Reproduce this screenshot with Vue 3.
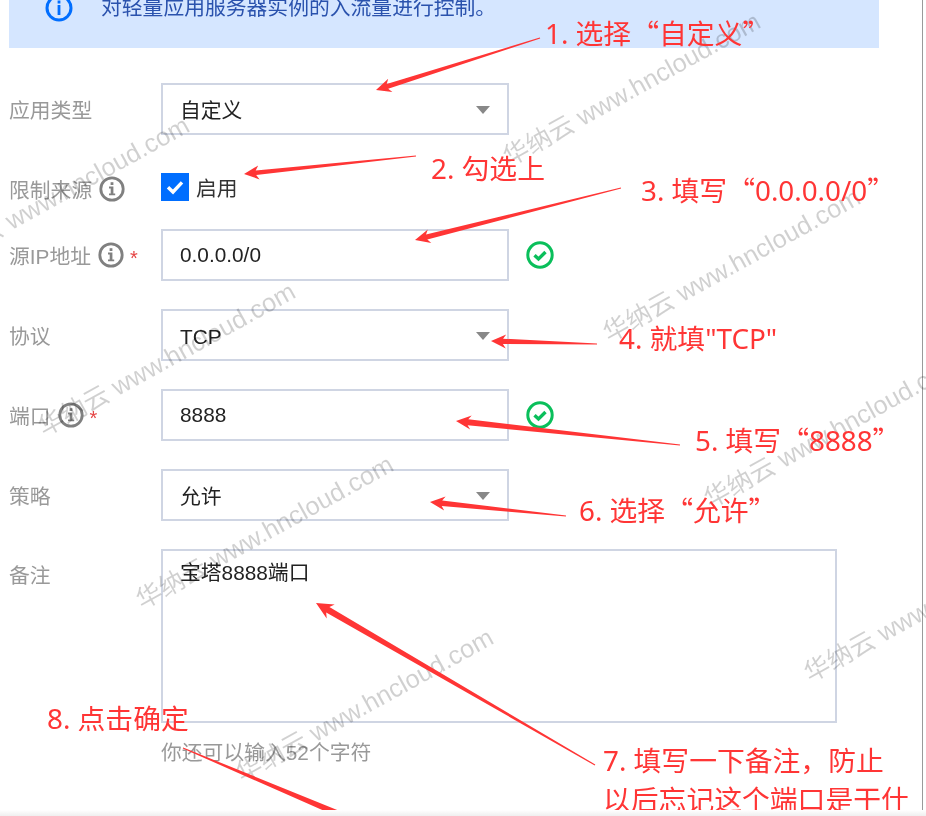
<script setup>
const marks = [
  [505, 159], [605, 335], [40, 429], [138, 602], [238, 775], [706, 501], [806, 675], [-66, 263]
].map(([x, y]) => ({ left: x + 'px', top: y + 'px' }))

function arrow([tx, ty], [px, py], len, head, shaft) {
  const d = Math.hypot(px - tx, py - ty)
  const ux = (px - tx) / d
  const uy = (py - ty) / d
  const nx = -uy
  const ny = ux
  const at = (back, side) => `${(px - ux * back + nx * side).toFixed(1)},${(py - uy * back + ny * side).toFixed(1)}`
  return [
    at(d, 0.5),
    at(len * 0.8, shaft),
    at(len, head),
    `${px},${py}`,
    at(len, -head),
    at(len * 0.8, -shaft),
    at(d, -0.5)
  ].join(' ')
}

const arrows = [
  arrow([540, 38], [376, 90], 15, 7, 2.4),
  arrow([416, 156], [244, 174], 15, 7, 2.4),
  arrow([621, 188], [415, 240], 15, 7, 2.6),
  arrow([597, 344], [491, 341], 15, 7, 2.6),
  arrow([680, 445], [456, 421], 15, 7, 3),
  arrow([566, 516], [430, 502], 15, 7, 2.8),
  arrow([595, 765], [316, 603], 17, 8, 3.2),
  arrow([183, 748], [372, 828], 18, 8, 3.4)
]

const notes = [
  { text: '1. 选择“自定义”', left: '545px', top: '12px' },
  { text: '2. 勾选上', left: '431px', top: '148px' },
  { text: '3. 填写“0.0.0.0/0”', left: '641px', top: '169px' },
  { text: '4. 就填"TCP"', left: '619px', top: '318px' },
  { text: '5. 填写“8888”', left: '695px', top: '419px' },
  { text: '6. 选择“允许”', left: '579px', top: '489px' },
  { text: '7. 填写一下备注，防止', left: '603px', top: '740px' },
  { text: '以后忘记这个端口是干什', left: '603px', top: '779px' },
  { text: '8. 点击确定', left: '47px', top: '698px' }
].map((n) => ({ ...n, parts: n.text.split(/([“”])/).filter(Boolean) }))
</script>

<template>
  <div class="page">
    <div class="panel">
      <div class="banner">
        <svg class="banner-icon" viewBox="0 0 28 28" aria-hidden="true">
          <circle cx="14" cy="14" r="12" fill="none" stroke="#006eff" stroke-width="3" />
          <rect x="12.6" y="6.5" width="2.8" height="3" fill="#006eff" />
          <rect x="12.6" y="11" width="2.8" height="10" fill="#006eff" />
        </svg>
        <span>对轻量应用服务器实例的入流量进行控制。</span>
      </div>

      <form class="form" @submit.prevent>
        <div class="row">
          <div class="label">应用类型</div>
          <div class="field select"><span>自定义</span><i class="caret"></i></div>
        </div>

        <div class="row row-check">
          <div class="label label-check">限制来源
            <svg class="info" viewBox="0 0 26 26" aria-hidden="true">
              <circle cx="13" cy="13" r="11.2" fill="none" stroke="#808080" stroke-width="2.8" />
              <rect x="11.6" y="6.2" width="2.8" height="2.8" fill="#808080" />
              <path d="M10 10.6h4.4v6.8h1.8v1.8H10v-1.8h1.7v-5H10z" fill="#808080" />
            </svg>
          </div>
          <div class="check">
            <span class="box">
              <svg viewBox="0 0 28 28" aria-hidden="true"><path d="M7 14.2l5 4.8 9-9.6" fill="none" stroke="#fff" stroke-width="3.4" /></svg>
            </span>
            <span>启用</span>
          </div>
        </div>

        <div class="row">
          <div class="label">源IP地址
            <svg class="info" viewBox="0 0 26 26" aria-hidden="true">
              <circle cx="13" cy="13" r="11.2" fill="none" stroke="#808080" stroke-width="2.8" />
              <rect x="11.6" y="6.2" width="2.8" height="2.8" fill="#808080" />
              <path d="M10 10.6h4.4v6.8h1.8v1.8H10v-1.8h1.7v-5H10z" fill="#808080" />
            </svg>
            <span class="star">*</span>
          </div>
          <div class="field"><span>0.0.0.0/0</span></div>
          <svg class="ok" viewBox="0 0 28 28" aria-hidden="true">
            <circle cx="14" cy="14" r="12.2" fill="none" stroke="#0abf5b" stroke-width="3" />
            <path d="M8.5 14.2l4 3.8 7-7" fill="none" stroke="#0abf5b" stroke-width="3.4" />
          </svg>
        </div>

        <div class="row">
          <div class="label">协议</div>
          <div class="field select"><span class="low">TCP</span><i class="caret"></i></div>
        </div>

        <div class="row">
          <div class="label">端口
            <svg class="info" viewBox="0 0 26 26" aria-hidden="true">
              <circle cx="13" cy="13" r="11.2" fill="none" stroke="#808080" stroke-width="2.8" />
              <rect x="11.6" y="6.2" width="2.8" height="2.8" fill="#808080" />
              <path d="M10 10.6h4.4v6.8h1.8v1.8H10v-1.8h1.7v-5H10z" fill="#808080" />
            </svg>
            <span class="star">*</span>
          </div>
          <div class="field"><span>8888</span></div>
          <svg class="ok" viewBox="0 0 28 28" aria-hidden="true">
            <circle cx="14" cy="14" r="12.2" fill="none" stroke="#0abf5b" stroke-width="3" />
            <path d="M8.5 14.2l4 3.8 7-7" fill="none" stroke="#0abf5b" stroke-width="3.4" />
          </svg>
        </div>

        <div class="row">
          <div class="label">策略</div>
          <div class="field select"><span>允许</span><i class="caret"></i></div>
        </div>

        <div class="row row-area">
          <div class="label label-area">备注</div>
          <div class="area-wrap">
            <div class="area">宝塔8888端口</div>
            <div class="hint">你还可以输入52个字符</div>
          </div>
        </div>
      </form>
    </div>

    <span v-for="(m, i) in marks" :key="i" class="mark" :style="m">华纳云 www.hncloud.com</span>

    <svg class="arrows" viewBox="0 0 926 816" aria-hidden="true">
      <polygon v-for="(p, i) in arrows" :key="i" :points="p" fill="#ff3535" />
    </svg>

    <span v-for="n in notes" :key="n.text" class="note" :style="{ left: n.left, top: n.top }"><template v-for="(part, i) in n.parts" :key="i"><span v-if="part === '“' || part === '”'" class="quote">{{ part }}</span><template v-else>{{ part }}</template></template></span>

    <div class="fade"></div>
  </div>
</template>

<style scoped>
.page {
  position: relative;
  width: 926px;
  height: 816px;
  overflow: hidden;
  background: #fff;
  font-family: "Liberation Sans", "Noto Sans CJK SC", sans-serif;
  font-size: 20.8px;
  color: #222;
  filter: blur(0.4px);
}
.panel {
  box-sizing: border-box;
  width: 923px;
  height: 816px;
  padding-left: 9px;
  border-right: 1px solid #9a9a9a;
}
.banner {
  box-sizing: border-box;
  display: flex;
  gap: 28px;
  width: 870px;
  height: 48px;
  padding-left: 36px;
  background: #d5e6ff;
  color: #2a52ad;
  line-height: 16px;
}
.banner-icon {
  flex: none;
  width: 28px;
  height: 28px;
  margin-top: -6px;
}
.form {
  display: flex;
  flex-direction: column;
  gap: 28px;
  padding-top: 35px;
}
.row {
  display: flex;
  align-items: center;
}
.row-check {
  height: 28px;
  margin-top: 10px;
}
.row-area {
  align-items: flex-start;
}
.label {
  display: flex;
  align-items: center;
  flex: none;
  width: 152px;
  color: #999;
  white-space: nowrap;
}
.label-check {
  margin-top: 4px;
}
.label-area {
  padding-top: 10px;
}
.info {
  width: 26px;
  height: 26px;
  margin-left: 7px;
}
.star {
  margin-left: 6px;
  color: #e54545;
  font-size: 20px;
  line-height: 20px;
  padding-top: 5px;
}
.field {
  box-sizing: border-box;
  display: flex;
  align-items: center;
  justify-content: space-between;
  width: 348px;
  height: 52px;
  padding: 0 17px;
  border: 2px solid #cfd5e3;
}
.low {
  padding-top: 3px;
}
.caret {
  width: 0;
  height: 0;
  margin-top: 2px;
  border-left: 7px solid transparent;
  border-right: 7px solid transparent;
  border-top: 8px solid #888;
}
.ok {
  width: 28px;
  height: 28px;
  margin-left: 17px;
}
.check {
  display: flex;
  align-items: center;
  gap: 7px;
  height: 28px;
  color: #333;
}
.box {
  display: block;
  width: 28px;
  height: 28px;
  background: #006eff;
}
.box svg {
  display: block;
}
.area-wrap {
  width: 676px;
}
.area {
  box-sizing: border-box;
  height: 174px;
  padding: 8px 17px;
  border: 2px solid #cfd5e3;
  line-height: 28px;
}
.hint {
  margin-top: 16px;
  color: #999;
  line-height: 28px;
}
.mark {
  position: absolute;
  margin-top: -15px;
  color: #000;
  opacity: 0.18;
  font-size: 25.5px;
  line-height: 30px;
  white-space: nowrap;
  transform: rotate(-29deg);
  transform-origin: 0 50%;
}
.arrows {
  position: absolute;
  left: 0;
  top: 0;
  width: 926px;
  height: 816px;
}
.note {
  position: absolute;
  color: #ff3535;
  font-family: "Noto Sans", "Noto Sans CJK SC", sans-serif;
  font-size: 27.8px;
  line-height: 40px;
  white-space: nowrap;
}
.quote {
  font-family: "Noto Sans CJK SC", sans-serif;
}
.fade {
  position: absolute;
  left: 0;
  right: 0;
  bottom: 0;
  height: 6px;
  background: linear-gradient(#ffffff, #efefef);
}
</style>
